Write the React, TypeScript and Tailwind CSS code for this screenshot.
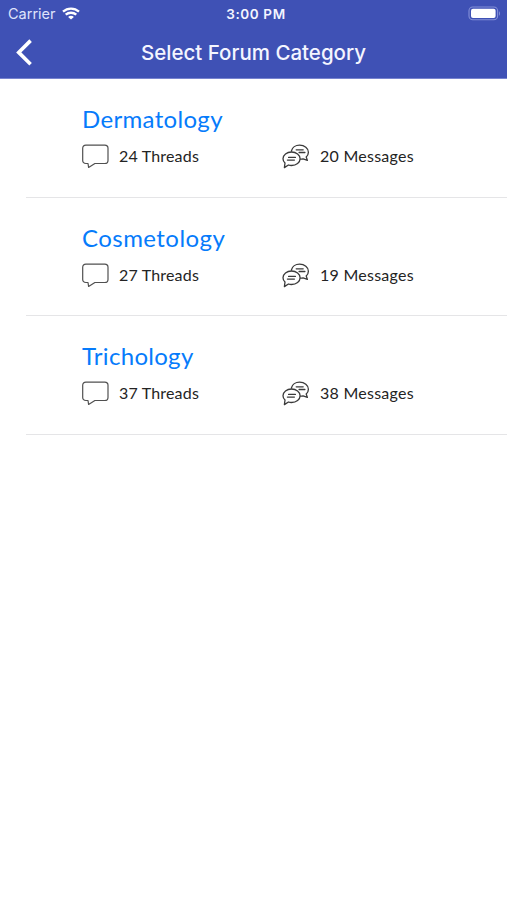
type Category = {
    name: string;
    threads: number;
    messages: number;
    nameStyle: string;
};

const categories: Category[] = [
    { name: "Dermatology", threads: 24, messages: 20, nameStyle: "tracking-[0.33px]" },
    { name: "Cosmetology", threads: 27, messages: 19, nameStyle: "tracking-[0.45px]" },
    { name: "Trichology", threads: 37, messages: 38, nameStyle: "tracking-[0.3px]" },
];

function WifiIcon() {
    return (
        <svg width="18" height="14" viewBox="0 0 18 14" fill="none" stroke="#fff" strokeWidth="2.3">
            <path d="M1 4.6C5.6.5 12.4.5 17 4.6" />
            <path d="M3.7 7.7C6.7 5.1 11.3 5.1 14.3 7.7" />
            <path d="M6.1 9.9C7.6 8.5 10.4 8.5 11.9 9.9L9 12.6z" fill="#fff" stroke="none" />
        </svg>
    );
}

function BatteryIcon() {
    return (
        <svg width="33" height="16" viewBox="0 0 33 16" fill="none">
            <rect x="1" y="1" width="28.6" height="12.8" rx="3.8" stroke="#8490d8" strokeWidth="1.1" />
            <rect x="3" y="2.8" width="24.6" height="9.2" rx="2" fill="#fff" />
            <path d="M31 5.2c1.3.6 1.3 3.9 0 4.5z" fill="#8490d8" />
        </svg>
    );
}

function ThreadIcon() {
    return (
        <svg width="28" height="26" viewBox="0 0 28 26" fill="none" stroke="#505050" strokeWidth="1.2" strokeLinejoin="round">
            <path d="M3.9 2.1h18.9c2 0 3.2 1.2 3.2 3.1v12.2c0 1.9-1.2 3.1-3.2 3.1H12.9l-6.3 3.9-.6-3.9H3.9c-2 0-3.2-1.2-3.2-3.1V5.2c0-1.9 1.2-3.1 3.2-3.1z" />
        </svg>
    );
}

function MessagesIcon() {
    return (
        <svg width="28" height="26" viewBox="0 0 28 26" fill="none" stroke="#3a3a3a" strokeWidth="1.3" strokeLinecap="round" strokeLinejoin="round">
            <path d="M9.4 8C10.2 4.7 13.5 2.2 17.6 2.2c4.9 0 8.8 3.1 8.8 7 0 1.9-.8 3.5-2.2 4.8l1.2 3.4-4.3-1.5c-.8.2-1.6.3-2.5.3" />
            <path d="M9.5 9c4.8 0 8.6 2.9 8.6 6.7s-3.8 6.8-8.6 6.8c-1.1 0-2.2-.2-3.1-.5l-4 2.6.6-4.6C1.7 18.8 1 17.3 1 15.7 1 11.9 4.8 9 9.5 9z" />
            <path d="M14.2 6.8h7M17.1 9.5h5.8M6.6 14.4h6.8M5.4 17.1h7" />
        </svg>
    );
}

function CategoryRow({ category }: { category: Category }) {
    return (
        <li className="ml-[26px] h-[118.5px] border-b border-[#e5e5e7] pl-14">
            <h2 className={`pt-[25px] text-[24px] leading-[30px] text-[#067bfb] ${category.nameStyle}`}>
                {category.name}
            </h2>
            <div className="mt-[9px] flex h-[26px] items-center text-[16px] text-[#242424]">
                <div className="flex w-[200px] items-center gap-[9px]">
                    <ThreadIcon />
                    <span className="tracking-[0.18px]">{category.threads} Threads</span>
                </div>
                <div className="flex items-center gap-[10px]">
                    <MessagesIcon />
                    <span className="tracking-[0.25px]">{category.messages} Messages</span>
                </div>
            </div>
        </li>
    );
}

export default function App() {
    return (
        <div className="min-h-[900px] w-full bg-white font-['Lato',sans-serif]">
            <header className="h-[79px] border-b border-[#7783cf] bg-[#3f51b5] font-['Inter',sans-serif] text-[#f4f5ff]">
                <div className="grid h-[27px] grid-cols-[1fr_auto_1fr] items-center pl-2 pr-[6px]">
                    <div className="flex items-center gap-[6px]">
                        <span className="text-[14.5px] text-[#dfe3fb]">Carrier</span>
                        <WifiIcon />
                    </div>
                    <div className="pl-[3px] pt-px text-center text-[13.5px] font-semibold tracking-[0.6px]">3:00 PM</div>
                    <div className="flex justify-end">
                        <BatteryIcon />
                    </div>
                </div>
                <div className="grid h-[50px] grid-cols-[48px_1fr_48px] items-center">
                    <button className="pl-[14px]" aria-label="Back">
                        <svg width="20" height="28" viewBox="0 0 20 28" fill="none" stroke="#fff" strokeWidth="3.6">
                            <path d="M16.6 2.6 4.7 14.4l11.9 11.8" />
                        </svg>
                    </button>
                    <h1 className="pt-[2px] text-center text-[20.5px] font-medium">Select Forum Category</h1>
                </div>
            </header>
            <ul>
                {categories.map((category) => (
                    <CategoryRow key={category.name} category={category} />
                ))}
            </ul>
        </div>
    );
}
